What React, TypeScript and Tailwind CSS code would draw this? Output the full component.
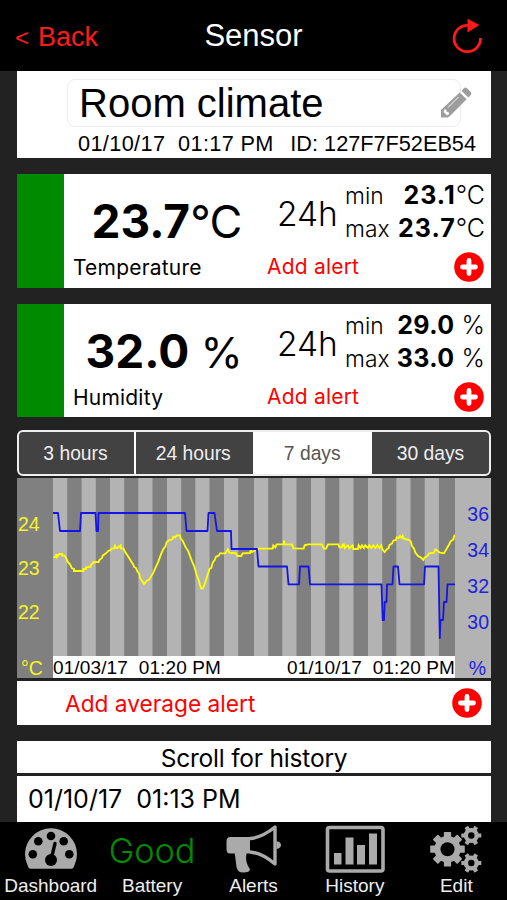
import clsx from 'clsx'

const readings = [
  { name: 'Temperature', value: '23.7', unit: '°C', min: '23.1', max: '23.7' },
  { name: 'Humidity', value: '32.0', unit: ' %', min: '29.0', max: '33.0' },
]

const ranges = ['3 hours', '24 hours', '7 days', '30 days']

export default function App() {
  return (
    <div className="flex h-[900px] w-[507px] flex-col overflow-hidden bg-[#222222] font-['Liberation_Sans',Arial,sans-serif] text-black">
      <Header />
      <main className="flex h-[751px] flex-col overflow-hidden pr-4 pl-[17px]">
        <SensorCard />
        {readings.map((reading) => (
          <ReadingCard key={reading.name} {...reading} />
        ))}
        <RangeTabs active="7 days" />
        <Chart />
        <div className="mt-[3px] flex h-11 shrink-0 items-center justify-between bg-white pr-[9px] pl-12 font-['Inter',sans-serif]">
          <span className="pt-[3px] text-[22.7px] text-[#ff0000]">Add average alert</span>
          <PlusIcon />
        </div>
        <div className="mt-4 h-8 shrink-0 bg-white text-center font-['Inter',sans-serif] text-[24.5px] leading-[34px] tracking-[-0.2px]">
          Scroll for history
        </div>
        <div className="mt-[3px] h-[46px] shrink-0 bg-white pl-[11px] font-['Inter',sans-serif] text-[25px] leading-[46px] whitespace-pre">
          01/10/17  01:13 PM
        </div>
      </main>
      <TabBar />
    </div>
  )
}

function Header() {
  return (
    <header className="grid h-[71px] shrink-0 grid-cols-3 items-center bg-black px-[15px]">
      <span className="flex items-baseline gap-[9px] pt-1 text-[27px] text-[#ff1a1a]">
        <span className="text-[24px]">&lt;</span>
        <span>Back</span>
      </span>
      <span className="pt-0.5 text-center text-[31px] text-white">Sensor</span>
      <svg className="mr-[6px] justify-self-end" width="34" height="38" viewBox="0 0 34 38">
        <path d="M17 8.4A13.2 13.2 0 1 0 28.5 21" fill="none" stroke="#ff1a1a" strokeWidth="2.8" />
        <path d="M15.5 1.7 L27.5 8 L15.5 15.5 Z" fill="#ff1a1a" />
      </svg>
    </header>
  )
}

function SensorCard() {
  return (
    <section className="h-[87px] shrink-0 bg-white pt-2 pl-[50px]">
      <div className="flex h-[48px] w-[394px] items-center rounded-lg border border-[#eeeeee] pl-[11px]">
        <span className="w-[361px] shrink-0 text-[40px] leading-[46px]">Room climate</span>
        <PencilIcon />
      </div>
      <div className="flex justify-between pr-[15px] pl-[11px] text-[21.7px] leading-[33px] whitespace-pre">
        <span className="tracking-[0.36px]">01/10/17  01:17 PM</span>
        <span>ID: 127F7F52EB54</span>
      </div>
    </section>
  )
}

function ReadingCard({ name, value, unit, min, max }: (typeof readings)[number]) {
  return (
    <section className="mt-4 flex h-[113.5px] shrink-0 bg-white font-['Inter',sans-serif]">
      <div className="w-[47px] bg-[#008a00]" />
      <div className="w-[180px]">
        <div className="mt-[18px] h-[60px] pr-0.5 text-right text-[46px] leading-[59px] whitespace-pre">
          <span className="font-bold">{value}</span>
          <span className={clsx(unit === '°C' ? 'text-[45px] tracking-[-0.5px]' : 'text-[43px] tracking-[-0.8px]')}>
            {unit}
          </span>
        </div>
        <div className="pl-[9px] text-[21px] leading-[32px] tracking-[0.2px]">{name}</div>
      </div>
      <div className="flex-1 pl-[23px]">
        <div className="flex h-[77px]">
          <span className="w-[78px] pl-[10px] text-[33.5px] leading-[80px] font-light">24h</span>
          <div className="flex-1 pt-[5px] pr-[6px]">
            <MinMax label="min" value={min} unit={unit} />
            <MinMax label="max" value={max} unit={unit} />
          </div>
        </div>
        <div className="flex h-[32px] items-center justify-between pr-[7px]">
          <span className="text-[21px] tracking-[0.2px] text-[#ff0000]">Add alert</span>
          <PlusIcon />
        </div>
      </div>
    </section>
  )
}

function MinMax({ label, value, unit }: { label: string; value: string; unit: string }) {
  return (
    <div className="flex h-[33px] justify-between leading-[33px]">
      <span className="text-[22.8px] font-light">{label}</span>
      <span className="text-[25px] whitespace-pre">
        <span className={clsx('font-bold', unit === '°C' ? 'tracking-[1px]' : 'tracking-[0.4px]')}>{value}</span>
        <span className="font-light">{unit}</span>
      </span>
    </div>
  )
}

function RangeTabs({ active }: { active: string }) {
  return (
    <nav className="mt-[13px] grid h-[46px] shrink-0 grid-cols-[115px_118.5px_119.5px_1fr] overflow-hidden rounded-md border-2 border-[#eeeeee] bg-[#424242]">
      {ranges.map((range, i) => (
        <span
          key={range}
          className={clsx(
            'text-center text-[19.3px] leading-[43px]',
            range === active ? 'bg-white text-[#555555]' : 'text-[#eeeeee]',
            i === 0 && 'pr-0.5',
            i === 1 && 'border-l-2 border-white pr-0.5',
          )}
        >
          {range}
        </span>
      ))}
    </nav>
  )
}

const stripes = [53, 81.6, 110, 138.3, 167, 195.3, 224, 254, 282.3, 311, 339.3, 368, 396.3, 424.7]

const humidity =
  '53,513 58,513 60,531 80,531 81,513 95.5,513 96.5,531 98,531 98.5,513 185,513 186.5,531 207.5,531 208.5,513 214.5,513 217,531 231,531 231.5,549 257,549 258.5,566.5 287,566.5 288.5,584.3 299,584.3 300,566.5 308.5,566.5 310,584.3 381.5,584.3 382.7,620 384,620 384.7,602 386.5,602 387,584.3 392.5,584.3 393.5,566.5 398,566.5 399.5,584.3 424,584.3 425,566.5 438.5,566.5 439.8,638 440.5,620 443,620 444,602 446.5,602 447.5,584.3 455,584.3'

// sampled at a third of a chart unit
const temperature =
  '160,82 168,80 168,75 172,75 172,80 178,72 186,72 186,77 194,77 198,84 203,95 210,103 216,115 222,117 222,123 250,123 250,117 258,117 258,112 272,110 272,105 280,99 280,96 296,96 298,90 306,84 308,77 318,70 326,62 330,62 335,56 342,55 345,47 348,54 352,54 356,50 362,46 362,55 370,55 375,65 385,80 400,104 402,110 408,114 412,124 418,132 420,144 426,152 432,162 436,158 440,152 446,150 452,142 460,128 468,110 475,95 484,70 490,57 496,50 500,36 508,30 518,28 520,20 526,22 530,16 540,16 542,26 548,32 556,50 565,64 575,92 583,110 590,135 596,150 600,165 604,176 608,176 612,168 620,144 628,118 634,113 638,98 644,90 648,80 656,77 660,70 676,70 680,64 684,58 688,68 708,70 712,78 724,78 728,70 750,69 752,60 756,66 775,56 818,56 820,46 826,52 830,43 851,43 852,32 854,43 876,43 880,55 911,56 914,46 924,43 965,43 972,56 978,56 984,43 1016,43 1018,52 1026,52 1028,43 1032,43 1034,54 1044,46 1048,55 1058,46 1060,57 1074,57 1076,46 1082,54 1086,46 1092,54 1096,46 1104,54 1108,46 1114,54 1120,46 1126,54 1132,46 1138,54 1144,46 1147,58 1154,66 1160,58 1166,54 1168,46 1176,40 1180,32 1188,30 1190,22 1196,24 1200,18 1206,24 1208,18 1212,26 1228,30 1232,34 1236,48 1242,56 1246,68 1254,78 1262,82 1270,90 1274,82 1282,78 1288,70 1302,68 1306,58 1312,62 1320,68 1332,70 1340,56 1346,46 1352,34 1360,28 1364,14'

function Chart() {
  return (
    <section className="mt-0.5 flex h-[200px] shrink-0 text-[19.5px]">
      <div className="w-9 bg-[#808080] pt-6 text-[#f5f523]">
        {['24', '23', '22'].map((tick) => (
          <div key={tick} className="h-11 pl-px leading-[45px]">
            {tick}
          </div>
        ))}
        <div className="pt-[22px] pl-1 leading-6">°C</div>
      </div>
      <div className="w-[402px]">
        <svg className="block" width="402" height="178" viewBox="53 478 402 178">
          <rect x="53" y="478" width="402" height="178" fill="#808080" />
          {stripes.map((x) => (
            <rect key={x} x={x} y="478" width="14.2" height="178" fill="#b3b3b3" />
          ))}
          <g transform="translate(0 530) scale(0.33333)">
            <polyline points={temperature} fill="none" stroke="#ffff00" strokeWidth="5.5" />
          </g>
          <polyline points={humidity} fill="none" stroke="#1414e6" strokeWidth="1.8" strokeLinejoin="round" />
        </svg>
        <div className="flex h-[22px] justify-between bg-white text-[19px] leading-6 tracking-[0.12px] whitespace-pre">
          <span>01/03/17  01:20 PM</span>
          <span>01/10/17  01:20 PM</span>
        </div>
      </div>
      <div className="flex-1 bg-[#b3b3b3] pt-[18px] text-right text-[#2222dd]">
        {['36', '34', '32', '30'].map((tick) => (
          <div key={tick} className="h-9 pr-0.5 leading-9">
            {tick}
          </div>
        ))}
        <div className="pt-[16px] pr-[5px] leading-6">%</div>
      </div>
    </section>
  )
}

function TabBar() {
  return (
    <footer className="grid h-[78px] shrink-0 grid-cols-5 bg-black text-center text-[19px] text-[#eeeeee]">
      <Tab label="Dashboard">
        <DashboardIcon />
      </Tab>
      <Tab label="Battery">
        <span className="font-['Inter',sans-serif] text-[34.3px] leading-[57px] font-light text-[#008c00]">Good</span>
      </Tab>
      <Tab label="Alerts">
        <MegaphoneIcon />
      </Tab>
      <Tab label="History">
        <HistoryIcon />
      </Tab>
      <Tab label="Edit">
        <GearsIcon />
      </Tab>
    </footer>
  )
}

function Tab({ label, children }: { label: string; children: React.ReactNode }) {
  return (
    <div className="flex flex-col items-center">
      <div className="flex h-[52px] justify-center">{children}</div>
      <div className="leading-6">{label}</div>
    </div>
  )
}

function PlusIcon() {
  return (
    <svg width="30" height="30" viewBox="0 0 30 30">
      <circle cx="15" cy="15" r="14.8" fill="#ff0000" />
      <path d="M15 8.5V21.5M8.5 15H21.5" stroke="#ffffff" strokeWidth="4.8" strokeLinecap="round" />
    </svg>
  )
}

function PencilIcon() {
  return (
    <svg className="shrink-0" width="32" height="32" viewBox="0 0 32 32">
      <g fill="#9d9d9d">
        <path d="M21.5 3.7 L24 1.2 Q25.5 0 27 1.2 L30.8 5 Q32 6.5 30.8 8 L28.3 10.5 Z" />
        <path d="M19.7 5.4 L26.6 12.3 L10.5 28.5 L8 30.5 L1 30.5 L1 23 L2.5 21.5 Z M4.5 22.5 L3.5 25 L7 28.2 L9.3 27.3 L8.5 25 L6.5 24.7 L6.3 22.6 Z" fillRule="evenodd" />
      </g>
      <path d="M8 20.5 L18.5 10" stroke="#ffffff" strokeWidth="0.9" />
    </svg>
  )
}

function DashboardIcon() {
  return (
    <svg width="54" height="52" viewBox="0 0 54 52">
      <path d="M6.5 46.7 Q4.8 46.7 4 44.5 Q1 38.5 1 32.3 A26 26 0 0 1 53 32.3 Q53 38.5 50 44.5 Q49.2 46.7 47.5 46.7 Z" fill="#aaaaaa" />
      <g fill="#000000">
        <circle cx="27" cy="14" r="4.3" />
        <circle cx="14.3" cy="19.3" r="4.3" />
        <circle cx="39.7" cy="19.3" r="4.3" />
        <circle cx="8.8" cy="32.3" r="4.3" />
        <circle cx="45.3" cy="32.3" r="4.3" />
        <circle cx="27" cy="38" r="6" />
      </g>
      <path d="M27.5 36 L31 21.5" stroke="#000000" strokeWidth="3.4" strokeLinecap="round" />
    </svg>
  )
}

function MegaphoneIcon() {
  return (
    <svg className="ml-0.5" width="56" height="52" viewBox="0 0 56 52">
      <path d="M4 15 H24 V31.5 H20.5 Q19.5 36 20.5 40 Q21.5 44 24 47 Q24 50.5 17 50.5 Q11.5 50.5 10.5 45 L8.8 31.5 H4 Q0.5 31.5 0.5 27 V19.5 Q0.5 15 4 15 Z" fill="#aaaaaa" />
      <path d="M24 16.5 Q36 15.5 49 5 V42 Q36 31 24 30" fill="none" stroke="#aaaaaa" strokeWidth="3.4" strokeLinejoin="round" />
      <path d="M50.5 19 Q55 20 55 23 Q55 26 50.5 27 Z" fill="#aaaaaa" />
    </svg>
  )
}

function HistoryIcon() {
  return (
    <svg width="60" height="52" viewBox="0 0 60 52">
      <rect x="2.5" y="5.5" width="55.5" height="43.5" rx="2" fill="none" stroke="#aaaaaa" strokeWidth="3.6" />
      <g fill="#aaaaaa">
        <rect x="9" y="31" width="7.5" height="11.5" />
        <rect x="20.5" y="15.5" width="8" height="27" />
        <rect x="32" y="23" width="8" height="19.5" />
        <rect x="44" y="11.5" width="8" height="31" />
      </g>
    </svg>
  )
}

function GearsIcon() {
  return (
    <svg width="52" height="52" viewBox="0 0 52 52">
      <Gear x={17.5} y={27.2} radius={17.3} teeth={8} hole={7} />
      <Gear x={41.3} y={13.5} radius={10} teeth={6} hole={3.2} />
      <Gear x={41.3} y={41} radius={10} teeth={6} hole={3.2} />
    </svg>
  )
}

function Gear({ x, y, radius, teeth, hole }: { x: number; y: number; radius: number; teeth: number; hole: number }) {
  const body = radius * 0.76
  const width = radius * 0.42
  const offset = teeth === 6 ? 30 : 0
  return (
    <g transform={`translate(${x} ${y})`} fill="#aaaaaa">
      {Array.from({ length: teeth }, (_, i) => (
        <rect
          key={i}
          x={-width / 2}
          y={-radius}
          width={width}
          height={radius / 2}
          rx={radius / 20}
          transform={`rotate(${offset + (i * 360) / teeth})`}
        />
      ))}
      <circle r={body} />
      <circle r={hole} fill="#000000" />
    </g>
  )
}
